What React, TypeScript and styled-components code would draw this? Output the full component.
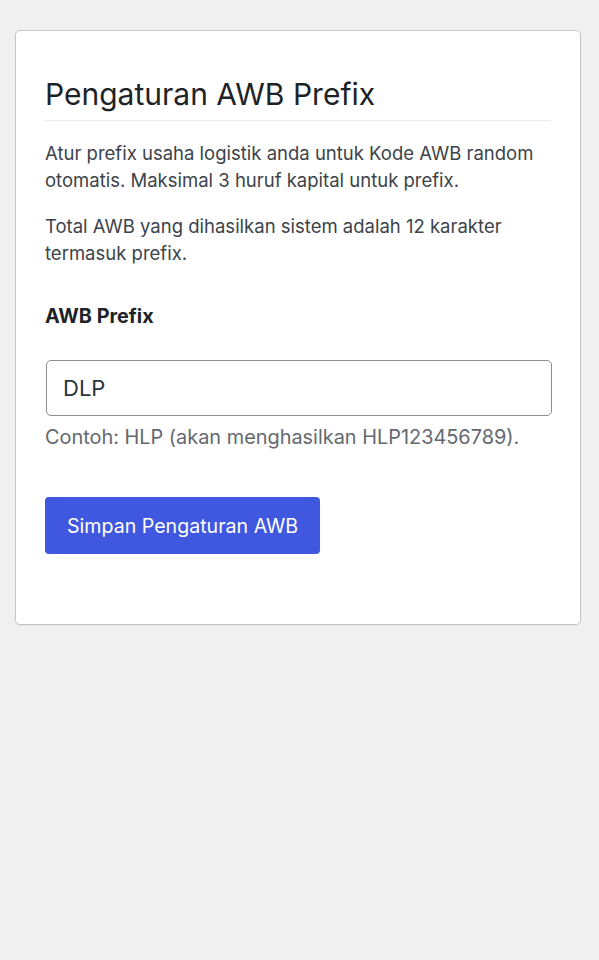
import React from "react";
import styled, { createGlobalStyle } from "styled-components";

const Global = createGlobalStyle`
  html, body { margin: 0; padding: 0; background: #f0f0f1; }
  body { font-family: Inter, "Noto Sans", sans-serif; -webkit-font-smoothing: antialiased; }
  * { box-sizing: border-box; }
`;

const Page = styled.div`
  padding: 30px 18px 0 15px;
  min-height: 960px;
`;

const Card = styled.section`
  background: #fff;
  border: 1px solid #c3c4c7;
  border-radius: 5px;
  box-shadow: 0 1px 1px rgba(0, 0, 0, 0.04);
  padding: 44px 29px 70px;
`;

const Title = styled.h2`
  margin: 0;
  font-size: 30px;
  line-height: 39px;
  font-weight: 400;
  color: #1d2327;
  padding-bottom: 6px;
  border-bottom: 1px solid #ececec;
`;

const Para = styled.p<{ $muted?: boolean; $gap?: number; $size?: number }>`
  margin: ${(p) => p.$gap ?? 19}px 0 0;
  font-size: ${(p) => p.$size ?? 18.5}px;
  line-height: 27px;
  color: ${(p) => (p.$muted ? "#646970" : "#3c434a")};
`;

const Label = styled.label`
  display: block;
  margin-top: 36px;
  font-size: 19.8px;
  line-height: 27px;
  font-weight: 700;
  color: #1d2327;
`;

const Input = styled.input`
  display: block;
  width: 100%;
  margin-top: 30px;
  height: 56px;
  padding: 0 16px;
  border: 1px solid #8c8f94;
  border-radius: 5px;
  font-family: inherit;
  font-size: 22px;
  color: #2c3338;
  background: #fff;
  outline: none;
  margin-left: 1px;
`;

const Button = styled.button`
  margin-top: 46px;
  height: 57px;
  padding: 0 22px;
  border: none;
  border-radius: 4px;
  background: #3f58df;
  color: #fff;
  font-family: inherit;
  font-size: 19.6px;
  cursor: pointer;
`;

export default function App() {
  return (
    <>
      <Global />
      <Page>
        <Card>
          <Title>Pengaturan AWB Prefix</Title>
          <Para>
            Atur prefix usaha logistik anda untuk Kode AWB random otomatis. Maksimal 3 huruf kapital untuk prefix.
          </Para>
          <Para>Total AWB yang dihasilkan sistem adalah 12 karakter termasuk prefix.</Para>
          <Label htmlFor="awb">AWB Prefix</Label>
          <Input id="awb" defaultValue="DLP" />
          <Para $muted $gap={8} $size={19.9}>
            Contoh: HLP (akan menghasilkan HLP123456789).
          </Para>
          <Button>Simpan Pengaturan AWB</Button>
        </Card>
      </Page>
    </>
  );
}
